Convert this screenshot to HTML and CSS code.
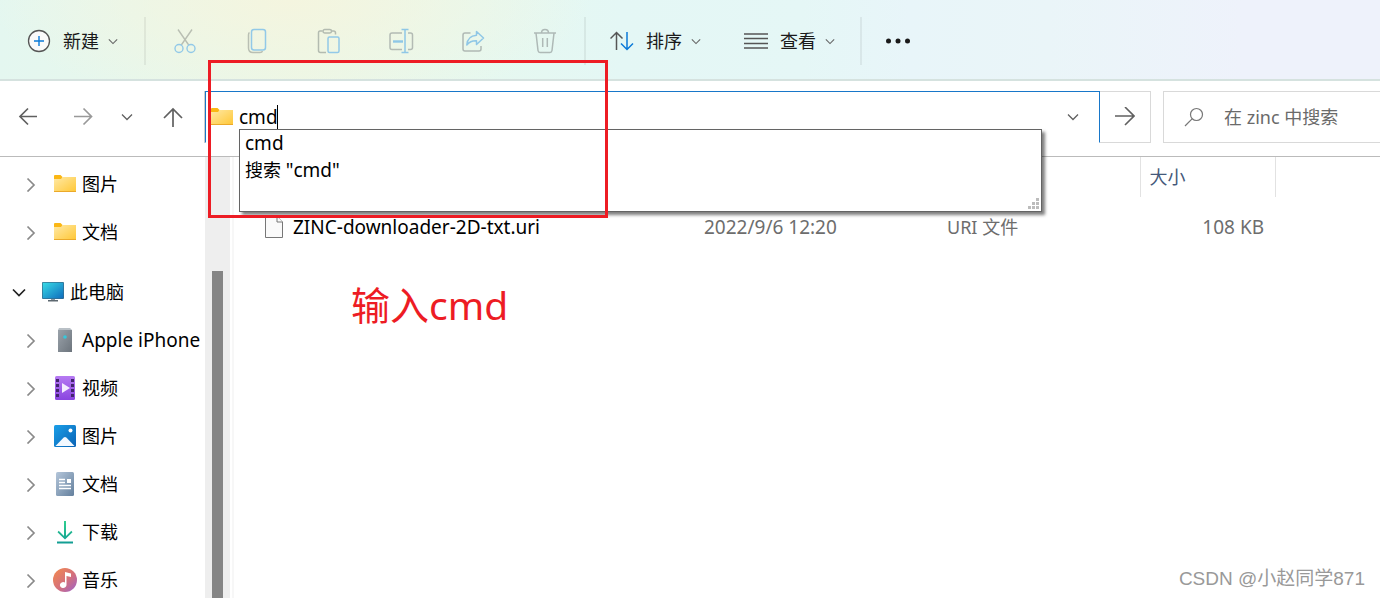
FILE: index.html
```html
<!DOCTYPE html>
<html lang="zh-CN">
<head>
<meta charset="utf-8">
<title>zinc</title>
<link rel="stylesheet" href="styles.css">
</head>
<body>
<svg class="defs" width="0" height="0" aria-hidden="true">
  <defs>
    <linearGradient id="gFolder" x1="0" y1="0" x2="1" y2="1"><stop offset="0" stop-color="#ffe9a6"/><stop offset="1" stop-color="#ffc735"/></linearGradient>
    <linearGradient id="gScreen" x1="0" y1="0" x2="1" y2="1"><stop offset="0" stop-color="#38dbe6"/><stop offset="1" stop-color="#0f6cbd"/></linearGradient>
    <linearGradient id="gDevice" x1="0" y1="0" x2="1" y2="1"><stop offset="0" stop-color="#9aa2aa"/><stop offset="1" stop-color="#6c747c"/></linearGradient>
    <linearGradient id="gVideo" x1="0" y1="0" x2="0" y2="1"><stop offset="0" stop-color="#b67af2"/><stop offset="1" stop-color="#8a45e0"/></linearGradient>
    <linearGradient id="gPic" x1="0" y1="0" x2="1" y2="1"><stop offset="0" stop-color="#1a9fe8"/><stop offset="1" stop-color="#0a62b4"/></linearGradient>
    <linearGradient id="gDoc" x1="0" y1="0" x2="1" y2="1"><stop offset="0" stop-color="#b4c6da"/><stop offset="1" stop-color="#64809d"/></linearGradient>
    <linearGradient id="gDown" x1="0" y1="0" x2="0" y2="1"><stop offset="0" stop-color="#2fcf8f"/><stop offset="1" stop-color="#129c94"/></linearGradient>
    <linearGradient id="gMusic" x1="0" y1="0" x2="1" y2="1"><stop offset="0" stop-color="#f58b4c"/><stop offset=".55" stop-color="#d4707c"/><stop offset="1" stop-color="#9b62cc"/></linearGradient>
    <symbol id="folder" viewBox="0 0 24 24"><path d="M1 4Q1 3 2 3H7.500L9.500 5V8H1Z" fill="#fbb714"/><path d="M1 7H8L9.500 5H23V20H1Z" fill="url(#gFolder)"/><path d="M1 19.500H23" stroke="#eba92a" fill="none"/></symbol>
    <symbol id="right" viewBox="0 0 12 16"><path d="M2.500 2.500L9 9L2.500 15.500" fill="none" stroke="#8a8a8a" stroke-width="1.700"/></symbol>
    <symbol id="down" viewBox="0 0 12 8"><path d="M1 1.500L6 6.500L11 1.500" fill="none" stroke="currentColor" stroke-width="1.300"/></symbol>
  </defs>
</svg>

<header class="toolbar">
  <button class="tool new"><svg width="24" height="24" viewBox="0 0 24 24" fill="none"><circle cx="12" cy="12" r="10.500" fill="#fafafa" stroke="#555" stroke-width="1.300"/><path d="M12 7V17M7 12H17" stroke="#0b79d8" stroke-width="1.400"/></svg><span>新建</span><svg class="chev" width="10" height="7"><use href="#down"/></svg></button>
  <i class="sep"></i>
  <button class="tool icon" aria-label="剪切"><svg width="24" height="26" viewBox="0 0 24 26" fill="none" stroke-width="1.400"><path d="M5 1.500L15.700 17M19 1.500L8.300 17" stroke="#b9bfb3"/><circle cx="6" cy="20.500" r="4" stroke="#92c9e8"/><circle cx="18" cy="20.500" r="4" stroke="#92c9e8"/></svg></button>
  <button class="tool icon" aria-label="复制"><svg width="24" height="26" viewBox="0 0 24 26" fill="none" stroke-width="1.500"><path d="M4.500 4.500Q3.500 5 3.500 7V20Q3.500 24.500 8 24.500H15Q17 24.500 17.500 23" stroke="#b9bfb3"/><rect x="6.500" y="1.500" width="14" height="20.500" rx="2.500" stroke="#92c9e8"/></svg></button>
  <button class="tool icon" aria-label="粘贴"><svg width="24" height="26" viewBox="0 0 24 26" fill="none" stroke-width="1.500"><path d="M5.500 3H3Q1.500 3 1.500 5V22.500Q1.500 24.500 3.500 24.500H9M14.500 3H16.500Q18.500 3 18.500 5V6.500" stroke="#b3bbb0"/><rect x="6" y="1.500" width="8.500" height="3.500" rx="1.700" stroke="#b3bbb0"/><rect x="11" y="9" width="11" height="15.500" rx="1.500" stroke="#92c9e8"/></svg></button>
  <button class="tool icon" aria-label="重命名"><svg width="26" height="26" viewBox="0 0 26 26" fill="none" stroke-width="1.500"><path d="M14 5H4Q2 5 2 7V19.500Q2 21.500 4 21.500H14M20 5H22.500Q24.500 5 24.500 7V19.500Q24.500 21.500 22.500 21.500H20" stroke="#b3bbb4"/><path d="M17 1.500V24.500M13.500 1.500H20.500M13.500 24.500H20.500" stroke="#8fc7e6"/><path d="M5 13.500H15" stroke="#8fc7e6" stroke-width="2.400"/></svg></button>
  <button class="tool icon" aria-label="共享"><svg width="24" height="26" viewBox="0 0 24 26" fill="none" stroke-width="1.500" stroke-linejoin="round"><path d="M9.500 5H4Q2 5 2 7V21Q2 23 4 23H18Q20 23 20 21V18" stroke="#b0b9b4"/><path d="M15.500 3.500L22.500 10L15.500 16.500V12.800Q9.500 12.500 5.800 17Q6.500 8 15.500 7.300Z" stroke="#8fc7e6"/></svg></button>
  <button class="tool icon" aria-label="删除"><svg width="24" height="26" viewBox="0 0 24 26" fill="none" stroke="#aeb9b6" stroke-width="1.500"><path d="M1 5H23M8.500 5Q8.500 1.500 12 1.500T15.500 5M3 5L5 22.500Q5.300 24.500 7 24.500H17Q18.700 24.500 19 22.500L21 5M9.700 10V19M14.300 10V19"/></svg></button>
  <i class="sep"></i>
  <button class="tool sort"><svg width="24" height="20" viewBox="0 0 24 20" fill="none" stroke-width="1.500"><path d="M6.500 19V1.500M.5 7.500L6.500 1.500L12.500 7.500" stroke="#555"/><path d="M17 1V18.500M11 12.500L17 18.500L23 12.500" stroke="#0b79d8"/></svg><span>排序</span><svg class="chev" width="10" height="7"><use href="#down"/></svg></button>
  <button class="tool view"><svg width="24" height="18" viewBox="0 0 24 18" stroke="#555" stroke-width="1.400"><path d="M0 2H24M0 6.500H24M0 11.500H24M0 16H24"/></svg><span>查看</span><svg class="chev" width="10" height="7"><use href="#down"/></svg></button>
  <i class="sep"></i>
  <button class="tool more" aria-label="更多"><svg width="26" height="6" viewBox="0 0 26 6" fill="#1a1a1a"><circle cx="3.500" cy="3" r="2.500"/><circle cx="13" cy="3" r="2.500"/><circle cx="22.500" cy="3" r="2.500"/></svg></button>
</header>

<nav class="navbar">
  <div class="moves">
    <button class="mv back" aria-label="后退"><svg width="20" height="20" viewBox="0 0 20 20" fill="none" stroke="#606060" stroke-width="1.700"><path d="M19 9.500H2M10 1.500L2 9.500L10 17.500"/></svg></button>
    <button class="mv fwd" aria-label="前进"><svg width="20" height="20" viewBox="0 0 20 20" fill="none" stroke="#999" stroke-width="1.700"><path d="M1 9.500H18.500M10.500 1.500L18.500 9.500L10.500 17.500"/></svg></button>
    <button class="mv recent" aria-label="最近的位置"><svg width="12" height="8"><use href="#down"/></svg></button>
    <button class="mv up" aria-label="上移"><svg width="20" height="20" viewBox="0 0 20 20" fill="none" stroke="#606060" stroke-width="1.700"><path d="M10 20V2M1 11L10 2L19 11"/></svg></button>
  </div>
  <div class="address">
    <svg width="24" height="24"><use href="#folder"/></svg>
    <div class="entry"><input type="text" value="cmd" aria-label="地址"><i class="caret"></i></div>
    <button class="history" aria-label="历史记录"><svg width="12" height="8"><use href="#down"/></svg></button>
    <div class="suggest">
      <ul>
        <li>cmd</li>
        <li>搜索 <span>"cmd"</span></li>
      </ul>
      <svg class="grip" width="11" height="11" viewBox="0 0 11 11" fill="#bcbcbc"><path d="M8 0h3v3H8zM4 4h3v3H4zM8 4h3v3H8zM0 8h3v3H0zM4 8h3v3H4zM8 8h3v3H8z"/></svg>
    </div>
  </div>
  <button class="go" aria-label="转到"><svg width="20" height="20" viewBox="0 0 20 20" fill="none" stroke="#606060" stroke-width="1.600"><path d="M0 9H19M10 0L19 9L10 18"/></svg></button>
  <label class="search"><svg width="20" height="20" viewBox="0 0 20 20" fill="none" stroke="#777" stroke-width="1.200"><circle cx="12.500" cy="7.500" r="6"/><path d="M8.300 11.700L1 19"/></svg><input type="text" placeholder="在 zinc 中搜索" aria-label="搜索"></label>
</nav>

<div class="body">
  <aside class="side">
    <ul class="tree">
      <li><svg class="arrow" width="12" height="16"><use href="#right"/></svg><svg width="24" height="24"><use href="#folder"/></svg><span>图片</span></li>
      <li><svg class="arrow" width="12" height="16"><use href="#right"/></svg><svg width="24" height="24"><use href="#folder"/></svg><span>文档</span></li>
      <li class="root"><svg class="arrow" width="14" height="10" viewBox="0 0 14 10" fill="none" stroke="#222" stroke-width="1.700"><path d="M1 2.500L7 8.500L13 2.500"/></svg><svg width="24" height="24" viewBox="0 0 24 24"><rect x="1" y="2" width="22" height="17" rx="1" fill="#366a8a"/><rect x="1.700" y="2.700" width="20.600" height="15.600" fill="url(#gScreen)"/><path d="M10 19h4v2h-4z" fill="#8b98a2"/><path d="M7 20h10v1.500H7z" fill="#5d6870"/></svg><span>此电脑</span></li>
      <li><svg class="arrow" width="12" height="16"><use href="#right"/></svg><svg width="24" height="24" viewBox="0 0 24 24"><path d="M6 0H17L19 2V4H5V2Z" fill="#b9c0c6"/><rect x="5" y="2" width="14" height="22" fill="url(#gDevice)"/><circle cx="12" cy="9" r="1.800" fill="#35c9dc"/></svg><span class="latin">Apple iPhone</span></li>
      <li><svg class="arrow" width="12" height="16"><use href="#right"/></svg><svg width="24" height="24" viewBox="0 0 24 24"><rect x="2" width="20" height="24" rx="1.500" fill="url(#gVideo)"/><path d="M3 3h3v3H3zM3 8h3v3H3zM3 13h3v3H3zM3 18h3v3H3zM18 3h3v3h-3zM18 8h3v3h-3zM18 13h3v3h-3zM18 18h3v3h-3z" fill="#43256f"/><path d="M9 7L17 12L9 17Z" fill="#f4ecff"/></svg><span>视频</span></li>
      <li><svg class="arrow" width="12" height="16"><use href="#right"/></svg><svg width="24" height="24" viewBox="0 0 24 24"><rect x="1" y="1" width="22" height="22" rx="1.500" fill="url(#gPic)"/><path d="M2.500 22L10.700 13.500Q12 12.300 13.300 13.500L21.500 22Z" fill="#f3f9ff"/><circle cx="17.500" cy="6.500" r="2" fill="#fff"/></svg><span>图片</span></li>
      <li><svg class="arrow" width="12" height="16"><use href="#right"/></svg><svg width="24" height="24" viewBox="0 0 24 24"><rect x="3" width="18" height="24" rx="1.500" fill="url(#gDoc)"/><path d="M6 7.500h6M6 10.500h6M6 13.500h12M6 16.500h12" stroke="#fff" stroke-width="1.300"/><path d="M14 7h4v4h-4z" fill="#fff"/></svg><span>文档</span></li>
      <li><svg class="arrow" width="12" height="16"><use href="#right"/></svg><svg width="24" height="24" viewBox="0 0 24 24"><path d="M11 1h2v15l5.300-5.300 1.200 1.600L12 19.600 4.500 12.300l1.200-1.600L11 16zM4 21.500h16v2H4z" fill="url(#gDown)"/></svg><span>下载</span></li>
      <li><svg class="arrow" width="12" height="16"><use href="#right"/></svg><svg width="24" height="24" viewBox="0 0 24 24"><circle cx="12" cy="12" r="12" fill="url(#gMusic)"/><path d="M12 4L18 5.500V9L13.500 8V17A3.300 3 0 1 1 12 14.500Z" fill="#fff"/></svg><span>音乐</span></li>
    </ul>
    <div class="track"><div class="thumb"></div></div>
  </aside>
  <main class="files">
    <table>
      <colgroup><col class="c-name"><col class="c-date"><col class="c-type"><col class="c-size"><col></colgroup>
      <thead><tr><th></th><th></th><th></th><th>大小</th><td></td></tr></thead>
      <tbody><tr>
        <td class="name"><div><svg width="18" height="22" viewBox="0 0 18 22" fill="#fafafa" stroke="#777"><path d="M.5.5H12L17.500 6V21.500H.5Z"/><path d="M12 .5V6H17.500"/></svg><span>ZINC-downloader-2D-txt.uri</span></div></td>
        <td>2022/9/6 12:20</td><td class="kind">URI 文件</td><td class="size">108 KB</td><td></td>
      </tr></tbody>
    </table>
  </main>
</div>

<div class="mark-box"></div>
<p class="mark-text">输入cmd</p>
<p class="credit">CSDN @小赵同学871</p>
</body>
</html>
```

FILE: styles.css
```css
* { box-sizing: border-box; }

html, body { height: 100%; }

body {
  margin: 0;
  display: flex;
  flex-direction: column;
  position: relative;
  overflow: hidden;
  background: #fff;
  color: #000;
  font: 18px/24px "Noto Sans", "Noto Sans CJK SC", sans-serif;
}

.defs { position: absolute; }
svg { display: block; flex: none; }
button, input { font: inherit; color: inherit; background: none; border: 0; padding: 0; margin: 0; outline: 0; }
button { display: flex; align-items: center; justify-content: center; }
ul { list-style: none; margin: 0; padding: 0; }

.toolbar {
  display: flex;
  align-items: center;
  flex: none;
  height: 81px;
  padding: 3px 0 0 26px;
  border-bottom: 2px solid #d5e2df;
  color: #1a1a1a;
  background:
    radial-gradient(ellipse 300px 110px at 290px 0, #f4f5df, #f4f5df00),
    linear-gradient(90deg, #e4f7f0, #ebf7e7 22%, #e6f8ef 34%, #e4f7f5 45%, #e5f7f6 58%, #e8f5f9 66%, #eaf5f8 76%, #eef2fb 90%, #eef2fb);
}
.tool { height: 48px; }
.tool span { margin: 0 9px 0 12px; white-space: nowrap; }
.chev { color: #666; }
.icon { width: 72px; }
.new { width: 93px; }
.sep { width: 2px; height: 48px; background: #0000000f; margin: 0 3px 0 25px; }
.icon + .sep { margin: 0 24px 0 3px; }
.view { margin-left: 43px; }
.more { margin-left: 20px; }

.navbar {
  display: flex;
  flex: none;
  height: 76px;
  padding: 10px 0 13px;
  border-bottom: 1px solid #bbb;
}
.moves { display: flex; width: 205px; }
.back { width: 56px; }
.fwd { width: 54px; }
.recent { width: 34px; color: #606060; }
.up { width: 58px; }
.address {
  flex: 1;
  display: flex;
  align-items: center;
  position: relative;
  padding-left: 4px;
  border: 1px solid #1877c9;
  border-bottom-color: #fff;
  box-shadow: -1px 0 #ccc;
}
.entry { flex: 1; position: relative; margin-left: 5px; font-size: 19px; }
.entry input { display: block; width: 100%; height: 24px; }
.caret { position: absolute; left: 38px; top: 0; width: 1px; height: 24px; background: #000; }
.history { width: 52px; height: 40px; color: #606060; }
.suggest {
  position: absolute;
  z-index: 2;
  left: 33px;
  right: 57px;
  top: 37px;
  height: 83px;
  padding: 0 5px;
  background: #fff;
  border: 1px solid #646464;
  box-shadow: 3px 3px 3px #00000080;
}
.suggest li { height: 27px; line-height: 27px; }
.suggest li:first-child, .suggest span { font-size: 19px; }
.grip { position: absolute; right: 2px; bottom: 2px; }
.go { width: 51px; border: 1px solid #d9d9d9; border-left: 0; }
.search {
  display: flex;
  align-items: center;
  width: 217px;
  margin-left: 12px;
  padding-left: 20px;
  gap: 20px;
  border: 1px solid #d9d9d9;
  border-right: 0;
}
.search input { width: 100%; min-width: 0; }
.search input::placeholder { color: #6a6a6a; opacity: 1; }

.body { flex: 1; min-height: 0; display: flex; }
.side { display: flex; width: 234px; flex: none; border-right: 2px solid #f7f7f7; }
.tree { flex: 1; padding-top: 3px; overflow: hidden; }
.tree li { display: flex; align-items: center; height: 48px; padding-left: 25px; white-space: nowrap; }
.arrow { margin-right: 16px; }
.tree span { margin-left: 5px; }
.tree .latin { font-size: 19px; }
.tree .root { margin-top: 12px; padding-left: 12px; }
.root .arrow { margin-right: 15px; }
.track { width: 25px; margin-right: 2px; padding: 114px 7px 0; background: #eee; }
.thumb { height: 100%; background: #858585; }

.files { flex: 1; min-width: 0; }
table { width: 100%; table-layout: fixed; border-collapse: collapse; }
.c-name { width: 460px; }
.c-date { width: 243px; }
.c-type { width: 203px; }
.c-size { width: 135px; }
th { height: 40px; padding: 0 9px; text-align: left; font-weight: 400; color: #44597a; border-right: 1px solid #e2e2e2; }
td { padding: 0 10px; color: #6d6d6d; font-size: 19px; white-space: nowrap; }
tbody td { height: 60px; }
.name { padding-left: 31px; color: #000; }
.name div { display: flex; align-items: center; gap: 10px; }
.kind { font-size: 18px; }
.size { text-align: right; padding-right: 11px; }

.mark-box { position: absolute; z-index: 3; left: 208px; top: 60px; width: 400px; height: 158px; border: 3px solid #ed1c24; pointer-events: none; }
.mark-text { position: absolute; left: 351px; top: 280px; margin: 0; font-size: 39px; line-height: 50px; color: #ed1c24; }
.credit { position: absolute; right: 15px; bottom: 7px; margin: 0; font-family: "Liberation Sans", "Noto Sans CJK SC", sans-serif; font-size: 19px; color: #999; }
```
